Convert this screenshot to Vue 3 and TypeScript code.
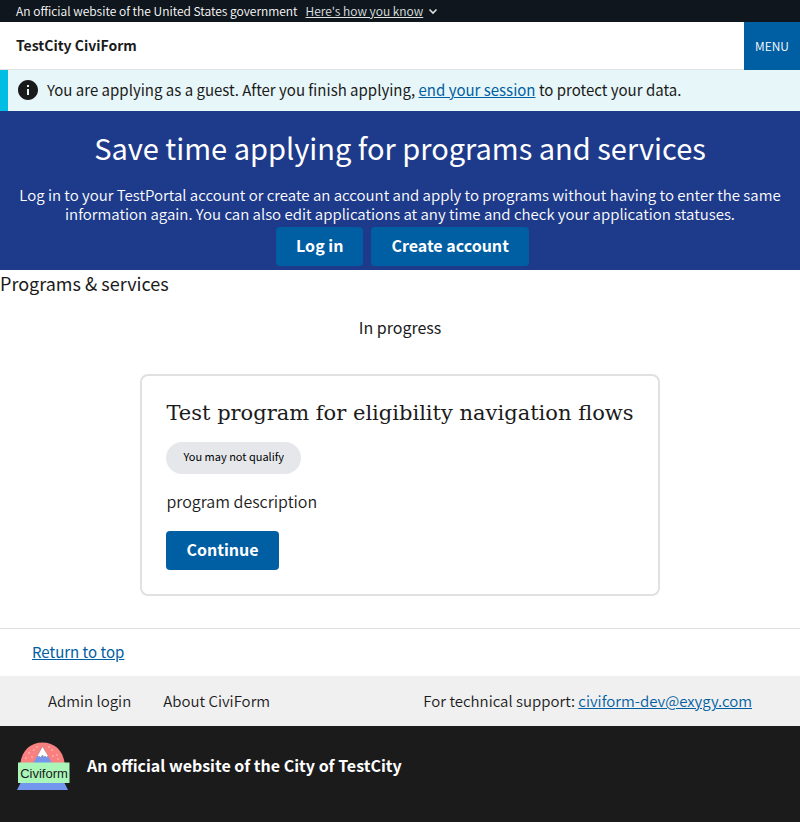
<script setup lang="ts">
interface FooterLink {
  label: string
  href: string
}

const footerLinks: FooterLink[] = [
  { label: 'Admin login', href: '#admin-login' },
  { label: 'About CiviForm', href: '#about' },
]

const snow: [number, number][] = [
  [12, 11], [17, 8], [20, 5], [32, 5], [35, 8], [40, 13], [9, 16], [15, 15], [36, 14], [41, 17],
]
</script>

<template>
  <div id="top" class="page">
    <section class="gov-banner" aria-label="Official website of the United States government">
      <span>An official website of the United States government</span>
      <button type="button" class="gov-toggle">
        <span class="gov-toggle-text">Here's how you know</span>
        <svg class="chevron" viewBox="0 0 10 10" aria-hidden="true">
          <path d="M1.5 3.500 L5 7 L8.500 3.500" fill="none" stroke="currentColor" stroke-width="1.6" />
        </svg>
      </button>
    </section>

    <header class="header">
      <a class="site-title" href="#top">TestCity CiviForm</a>
      <button type="button" class="menu-button">MENU</button>
    </header>

    <main>
      <div class="alert">
        <svg class="alert-icon" viewBox="2 2 20 20" aria-hidden="true">
          <path
            fill="currentColor"
            d="M12 2C6.48 2 2 6.48 2 12s4.48 10 10 10 10-4.48 10-10S17.52 2 12 2zm1 15h-2v-6h2v6zm0-8h-2V7h2v2z"
          />
        </svg>
        <p class="alert-text">
          You are applying as a guest. After you finish applying,
          <a class="link" href="#end-session">end your session</a> to protect your data.
        </p>
      </div>

      <section class="hero">
        <h1 class="hero-title">Save time applying for programs and services</h1>
        <p class="hero-text">
          Log in to your TestPortal account or create an account and apply to programs without having to enter the same
          information again. You can also edit applications at any time and check your application statuses.
        </p>
        <div class="hero-actions">
          <button type="button" class="button">Log in</button>
          <button type="button" class="button">Create account</button>
        </div>
      </section>

      <h2 class="section-title">Programs &amp; services</h2>
      <h3 class="group-title">In progress</h3>

      <article class="card">
        <h4 class="card-title">Test program for eligibility navigation flows</h4>
        <span class="tag">You may not qualify</span>
        <p class="card-text">program description</p>
        <button type="button" class="button">Continue</button>
      </article>
    </main>

    <footer>
      <div class="return">
        <a class="link" href="#top">Return to top</a>
      </div>
      <div class="footer-bar">
        <nav class="footer-nav" aria-label="Footer">
          <a v-for="item in footerLinks" :key="item.label" class="footer-link" :href="item.href">{{ item.label }}</a>
        </nav>
        <span>For technical support: <a class="link" href="mailto:civiform-dev@exygy.com">civiform-dev@exygy.com</a></span>
      </div>
      <div class="identity">
        <svg class="logo" viewBox="0 0 54 49" role="img" aria-label="Civiform">
          <path d="M3 24 C4 9 13 0.500 25.500 0.500 C38 0.500 47 9 48 24 Z" fill="#fa8080" />
          <circle v-for="([x, y], i) in snow" :key="i" :cx="x" :cy="y" r="0.700" fill="#ffd9d9" />
          <path d="M12 28 L25.500 5 L39 28 Z" fill="#7396ee" />
          <path
            d="M25.500 4.500 L31 13.500 L29.500 15.500 L28 14 L26.500 15 L25.500 13 L23.500 15.500 L22.500 14.500 L20 14.500 Z"
            fill="#ffffff"
            stroke="#777777"
            stroke-width="0.400"
          />
          <path d="M5 38 H46 L51 48 H0 Z" fill="#7396ee" />
          <rect x="1" y="20.500" width="51.500" height="20.500" fill="#aaf5b8" />
          <text x="27" y="35.500" text-anchor="middle" class="logo-text">Civiform</text>
        </svg>
        <p class="identity-text">An official website of the City of TestCity</p>
      </div>
    </footer>
  </div>
</template>

<style>
body {
  margin: 0;
  background: #ffffff;
}
</style>

<style scoped>
.page {
  font-family: "Noto Sans CJK SC", "Open Sans", sans-serif;
  font-size: 15px;
  line-height: 20px;
  color: #1b1b1b;
}

h1, h2, h3, h4, p {
  margin: 0;
  font-weight: 400;
}

button {
  font-family: inherit;
  border: 0;
  cursor: pointer;
}

.link {
  color: #005ea2;
  text-decoration: underline;
}

.gov-banner {
  display: flex;
  align-items: center;
  gap: 8px;
  height: 22px;
  padding: 0 16px;
  background: #10161d;
  color: #ffffff;
  font-size: 12px;
  font-weight: 350;
}

.gov-toggle {
  display: flex;
  align-items: center;
  gap: 5px;
  padding: 0;
  background: none;
  color: #dfe1e2;
  font-size: 12px;
  font-weight: 350;
  line-height: 20px;
}

.gov-toggle-text {
  text-decoration: underline;
}

.chevron {
  width: 10px;
  height: 10px;
}

.header {
  display: flex;
  align-items: stretch;
  justify-content: space-between;
  height: 48px;
  background: linear-gradient(#dfe1e2, #dfe1e2) bottom / 100% 1px no-repeat;
}

.site-title {
  align-self: center;
  padding: 0 16px 2px;
  color: inherit;
  font-size: 14px;
  font-weight: 700;
  text-decoration: none;
}

.menu-button {
  min-width: 56px;
  padding: 0 8px 2px;
  background: #005ea2;
  color: #ffffff;
  font-size: 12px;
  font-weight: 350;
}

.alert {
  display: flex;
  align-items: center;
  gap: 9px;
  padding: 10px 16px 11px 10px;
  border-left: 8px solid #00bde3;
  background: #e7f6f8;
}

.alert-icon {
  flex: none;
  width: 20px;
  height: 20px;
}

.hero {
  padding: 14px 12px 4px;
  background: #1e3a8a;
  color: #ffffff;
  text-align: center;
}

.hero-title {
  font-size: 29px;
  line-height: 44px;
}

.hero-text {
  padding: 16px 0 4px;
  font-size: 15px;
  font-weight: 350;
  line-height: 19px;
}

.hero-actions {
  display: flex;
  justify-content: center;
  gap: 8px;
  padding-left: 5px;
}

.button {
  height: 39px;
  padding: 0 20px 3px;
  border-radius: 4px;
  background: #005ea2;
  color: #ffffff;
  font-size: 16px;
  font-weight: 700;
  line-height: 20px;
}

.section-title {
  font-size: 18px;
  line-height: 26px;
}

.group-title {
  padding: 21px 0 37px;
  font-size: 16px;
  text-align: center;
}

.card {
  display: flex;
  flex-direction: column;
  align-items: flex-start;
  width: fit-content;
  margin: 0 auto 32px;
  padding: 24px;
  border: 2px solid #dfe1e2;
  border-radius: 8px;
}

.card-title {
  font-family: "DejaVu Serif", serif;
  font-size: 21px;
  line-height: 26px;
}

.tag {
  margin-top: 16px;
  padding: 4px 17px 8px;
  border-radius: 16px;
  background: #e5e7eb;
  color: #000000;
  font-size: 11px;
}

.card-text {
  padding: 17px 0 20px;
  font-size: 16px;
  font-weight: 350;
}

.return {
  padding: 13px 32px 14px;
  border-top: 1px solid #dfe1e2;
}

.footer-bar {
  display: flex;
  align-items: center;
  justify-content: space-between;
  padding: 15px 48px;
  background: #f0f0f0;
  font-weight: 350;
}

.footer-nav {
  display: flex;
  gap: 32px;
}

.footer-link {
  color: inherit;
  text-decoration: none;
}

.identity {
  display: flex;
  align-items: center;
  gap: 16px;
  padding: 16px 17px 31px;
  background: #1b1b1b;
  color: #ffffff;
}

.logo {
  width: 54px;
  height: 49px;
}

.logo-text {
  font-family: "Liberation Sans", sans-serif;
  font-size: 13px;
  fill: #1b1b1b;
}

.identity-text {
  padding-bottom: 3px;
  font-size: 16px;
  font-weight: 700;
}
</style>
